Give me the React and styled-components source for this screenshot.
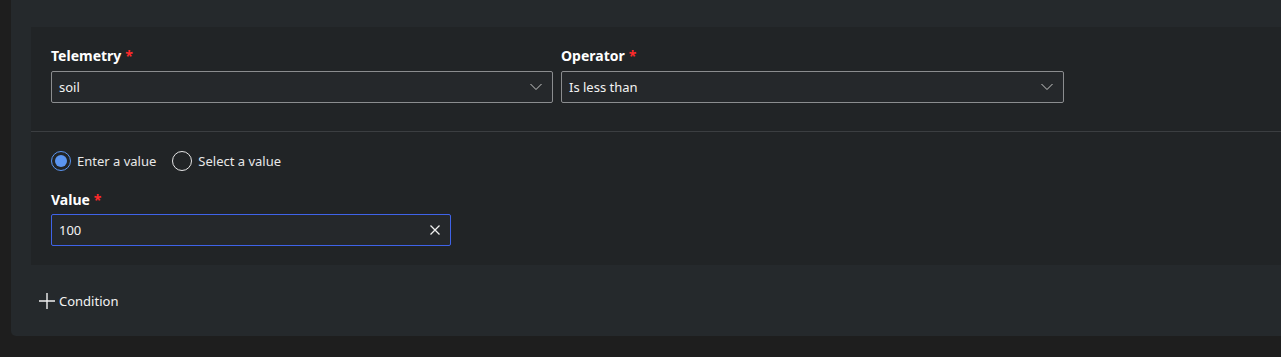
import styled, { createGlobalStyle } from "styled-components";

const Global = createGlobalStyle`
  html, body {
    margin: 0;
    padding: 0;
    background: #1e1e1e;
    overflow: hidden;
  }
  body {
    font-family: "Noto Sans", "Open Sans", sans-serif;
    color: #f3f3f3;
  }
`;

const Page = styled.div`
  display: flex;
  height: 357px;
  padding-left: 11px;
  box-sizing: border-box;
`;

const Panel = styled.div`
  flex: 1;
  height: 336px;
  background: #25292c;
  border-radius: 0 0 0 5px;
  padding: 27px 0 0 20px;
  box-sizing: border-box;
  display: flex;
  flex-direction: column;
`;

const Card = styled.div`
  background: #212426;
  display: flex;
  flex-direction: column;
`;

const Section = styled.div`
  padding: ${(p) => p.pad};
  display: flex;
  flex-direction: ${(p) => (p.column ? "column" : "row")};
  gap: ${(p) => p.gap || "0"};
`;

const Divider = styled.div`
  height: 1px;
  background: #3b3e41;
`;

const Field = styled.div`
  display: flex;
  flex-direction: column;
  width: ${(p) => p.width}px;
`;

const Label = styled.label`
  font-size: 14px;
  font-weight: 700;
  line-height: 20px;
  color: #ffffff;
  margin-bottom: ${(p) => p.gap || 5}px;

  span {
    color: #ff2a2a;
    margin-left: 4px;
  }
`;

const Box = styled.div`
  height: 32px;
  box-sizing: border-box;
  border: 1px solid ${(p) => (p.focused ? "#3f63e8" : "#8b8d8f")};
  border-radius: 2px;
  background: #25282b;
  display: flex;
  align-items: center;
  padding: 0 10px 0 7px;
  font-size: 13px;
  color: #f3f3f3;
`;

const BoxText = styled.div`
  flex: 1;
`;

const RadioRow = styled.div`
  display: flex;
  align-items: center;
  gap: 16px;
  height: 20px;
`;

const RadioItem = styled.div`
  display: flex;
  align-items: center;
  gap: 6px;
  font-size: 13px;
  color: #e8e8e8;
`;

const Circle = styled.div`
  width: 20px;
  height: 20px;
  box-sizing: border-box;
  border-radius: 50%;
  border: 1px solid ${(p) => (p.checked ? "#5b95f0" : "#e6e6e6")};
  display: flex;
  align-items: center;
  justify-content: center;

  &::after {
    content: "";
    width: 12px;
    height: 12px;
    border-radius: 50%;
    background: ${(p) => (p.checked ? "#5b95f0" : "transparent")};
  }
`;

const AddButton = styled.button`
  margin-top: 20px;
  align-self: flex-start;
  height: 32px;
  padding: 0 8px;
  background: none;
  border: none;
  display: flex;
  align-items: center;
  gap: 4px;
  font-family: inherit;
  font-size: 13px;
  color: #f3f3f3;
`;

const Chevron = () => (
  <svg width="12" height="8" viewBox="0 0 12 8" fill="none">
    <path d="M0.5 1l5.5 5.5L11.5 1" stroke="#c8c8c8" strokeWidth="1" />
  </svg>
);

const Cross = () => (
  <svg width="10" height="10" viewBox="0 0 10 10">
    <path d="M0.5 0.5l9 9M9.5 0.5l-9 9" stroke="#f0f0f0" strokeWidth="1.3" />
  </svg>
);

const Plus = () => (
  <svg width="16" height="16" viewBox="0 0 16 16">
    <path d="M8 0v16M0 8h16" stroke="#f0f0f0" strokeWidth="1.4" />
  </svg>
);

export default function App() {
  return (
    <>
      <Global />
      <Page>
        <Panel>
          <Card>
            <Section pad="19px 20px 28px" gap="8px">
              <Field width={502}>
                <Label>
                  Telemetry<span>*</span>
                </Label>
                <Box>
                  <BoxText>soil</BoxText>
                  <Chevron />
                </Box>
              </Field>
              <Field width={503}>
                <Label>
                  Operator<span>*</span>
                </Label>
                <Box>
                  <BoxText>Is less than</BoxText>
                  <Chevron />
                </Box>
              </Field>
            </Section>
            <Divider />
            <Section pad="19px 20px 19px" column gap="19px">
              <RadioRow>
                <RadioItem>
                  <Circle checked />
                  Enter a value
                </RadioItem>
                <RadioItem>
                  <Circle />
                  Select a value
                </RadioItem>
              </RadioRow>
              <Field width={400}>
                <Label gap={4}>
                  Value<span>*</span>
                </Label>
                <Box focused>
                  <BoxText>100</BoxText>
                  <Cross />
                </Box>
              </Field>
            </Section>
          </Card>
          <AddButton>
            <Plus />
            Condition
          </AddButton>
        </Panel>
      </Page>
    </>
  );
}
